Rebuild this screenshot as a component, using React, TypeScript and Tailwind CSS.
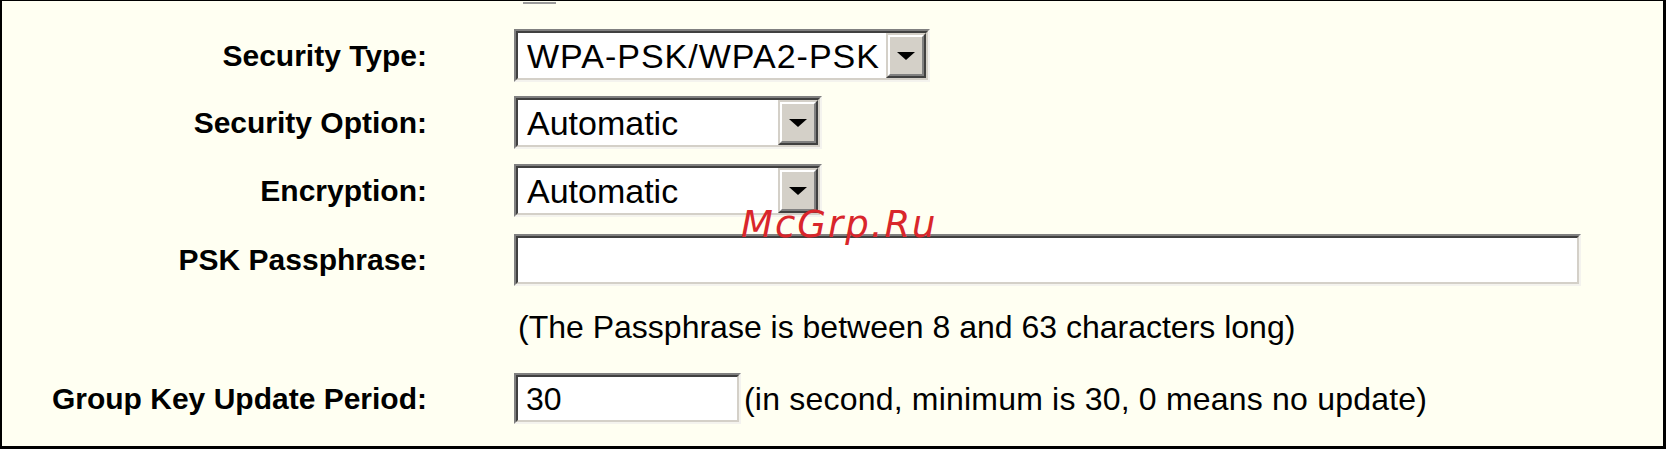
function Sunken({ className, children }: { className: string; children?: React.ReactNode }) {
  return (
    <div className={`border-2 border-t-[#808080] border-l-[#808080] border-b-[#f4f3ee] border-r-[#f4f3ee] ${className}`}>
      <div className="flex h-full border-2 border-t-[#404040] border-l-[#404040] border-b-[#d4d0c8] border-r-[#d4d0c8] bg-white">
        {children}
      </div>
    </div>
  );
}

function Select({ value, className, textClass }: { value: string; className: string; textClass: string }) {
  return (
    <Sunken className={className}>
      <div className={`flex flex-1 items-center pl-[9px] text-[34px] leading-none text-black ${textClass}`}>{value}</div>
      <div className="flex w-[40px] border-2 border-t-[#d4d0c8] border-l-[#d4d0c8] border-b-[#404040] border-r-[#404040] bg-[#d4d0c8]">
        <div className="flex flex-1 items-center justify-center border-2 border-t-white border-l-white border-b-[#808080] border-r-[#808080]">
          <div className="h-0 w-0 border-x-[9px] border-t-[8px] border-x-transparent border-t-black" />
        </div>
      </div>
    </Sunken>
  );
}

function Row({ label, children, className }: { label: string; children: React.ReactNode; className: string }) {
  return (
    <div className={`flex items-center ${className}`}>
      <div className="w-[425px] text-right text-[30px] font-bold leading-none text-black">{label}</div>
      <div className="ml-[87px] flex items-center">{children}</div>
    </div>
  );
}

export default function App() {
  return (
    <div className="relative h-[449px] w-[1666px] overflow-hidden border-t border-l-2 border-r-[3px] border-b-[3px] border-black bg-[#fffff2] font-['Liberation_Sans',Arial,sans-serif]">
      {/* clipped row above */}
      <div className="flex h-[3px]">
        <div className="ml-[521px] mt-px h-[2px] w-[33px] bg-[#9a9a9a]" />
      </div>

      <Row label="Security Type:" className="mt-[25px] h-[53px]">
        <Select value="WPA-PSK/WPA2-PSK" className="h-[53px] w-[416px]" textClass="tracking-[1px]" />
      </Row>
      <Row label="Security Option:" className="mt-[14px] h-[53px]">
        <Select value="Automatic" className="h-[53px] w-[308px]" textClass="tracking-normal" />
      </Row>
      <Row label="Encryption:" className="mt-[15px] h-[53px]">
        <Select value="Automatic" className="h-[53px] w-[308px]" textClass="tracking-normal" />
      </Row>
      <Row label="PSK Passphrase:" className="mt-[17px] h-[52px]">
        <Sunken className="h-[52px] w-[1067px]" />
      </Row>

      <div className="ml-[516px] mt-[24px] text-[32px] leading-[34px] text-black">
        (The Passphrase is between 8 and 63 characters long)
      </div>

      <Row label="Group Key Update Period:" className="mt-[29px] h-[51px]">
        <Sunken className="h-[51px] w-[227px]">
          <div className="flex items-center pl-[8px] text-[32px] leading-none text-black">30</div>
        </Sunken>
        <span className="ml-[3px] text-[32px] leading-none tracking-[0.2px] text-black">(in second, minimum is 30, 0 means no update)</span>
      </Row>

      {/* watermark */}
      <div className="absolute left-[739px] top-[205px] font-['DejaVu_Sans',sans-serif] text-[37px] italic leading-none tracking-[2px] text-[#d9262b]">
        McGrp.Ru
      </div>
    </div>
  );
}
